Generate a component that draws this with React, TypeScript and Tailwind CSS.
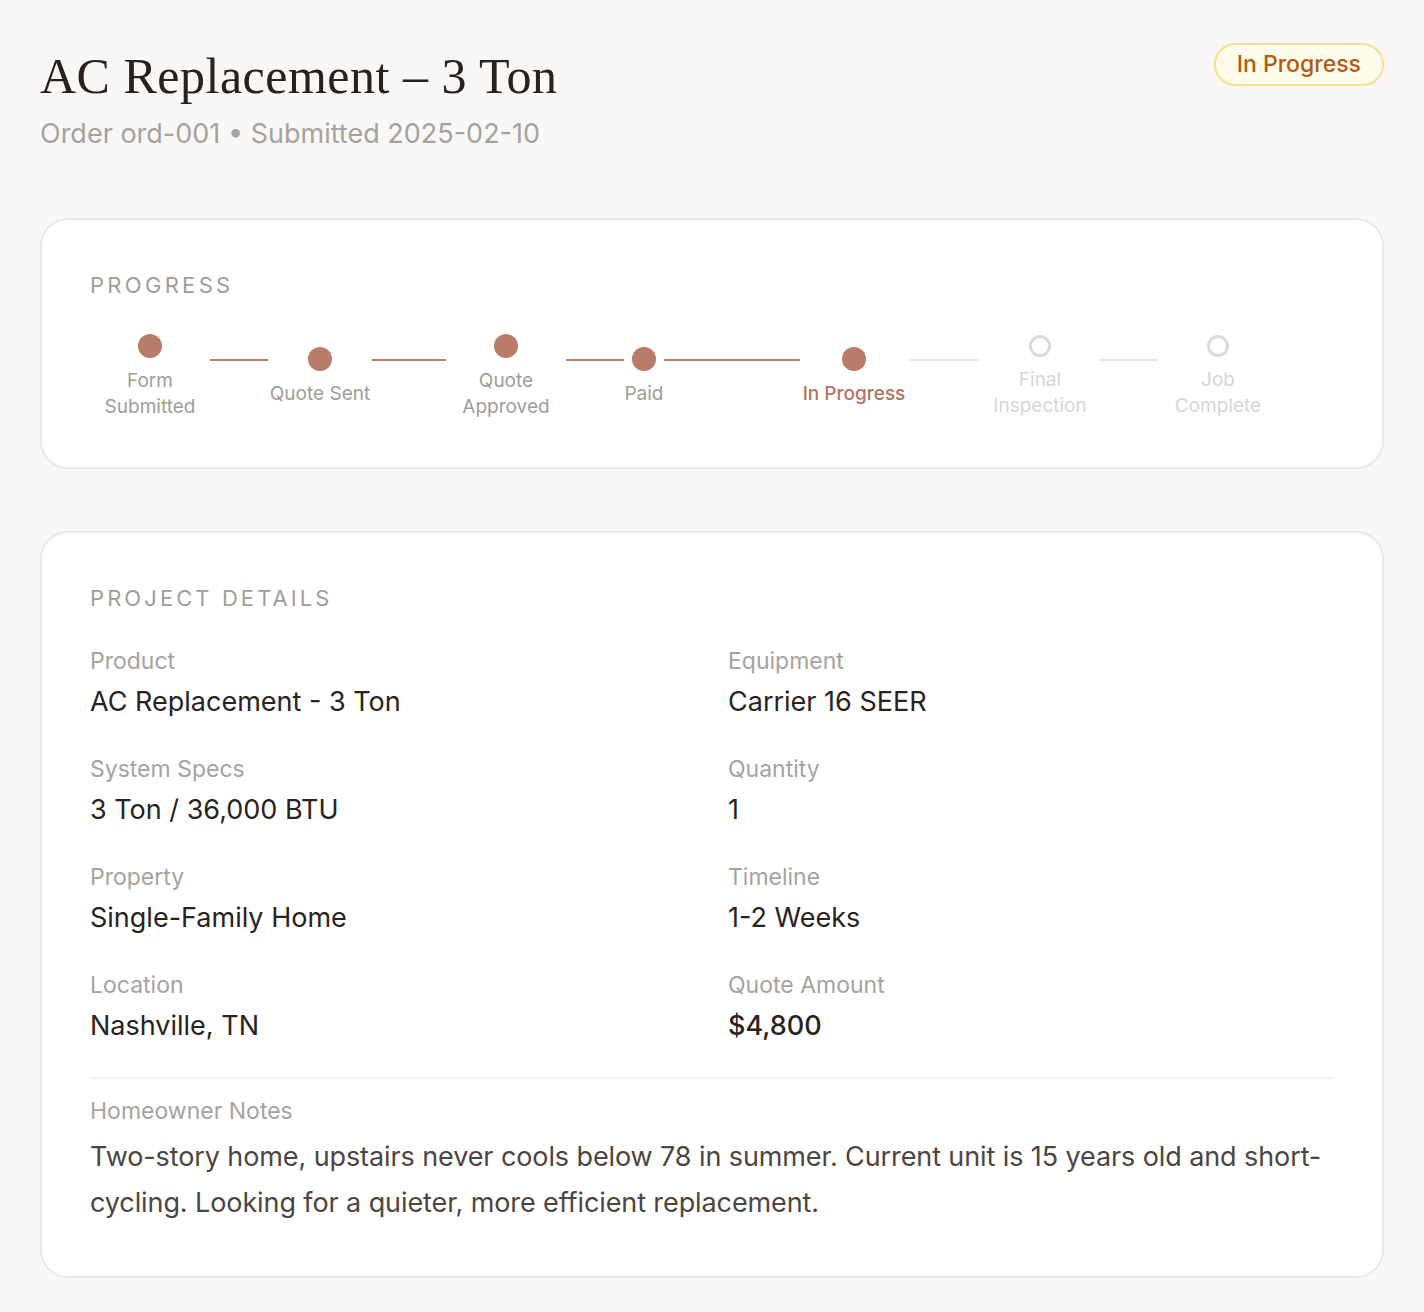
import React from "react";

type Step = { lines: string[]; w: string; state: "done" | "current" | "todo" };

const steps: Step[] = [
  { lines: ["Form", "Submitted"], w: "w-[120px]", state: "done" },
  { lines: ["Quote Sent"], w: "w-[104px]", state: "done" },
  { lines: ["Quote", "Approved"], w: "w-[120px]", state: "done" },
  { lines: ["Paid"], w: "w-[40px]", state: "done" },
  { lines: ["In Progress"], w: "w-[108px]", state: "current" },
  { lines: ["Final", "Inspection"], w: "w-[120px]", state: "todo" },
  { lines: ["Job", "Complete"], w: "w-[120px]", state: "todo" },
];

// connector widths between steps, measured off the design
const lines = [
  { w: "w-[58px]", on: true },
  { w: "w-[74px]", on: true },
  { w: "w-[58px]", on: true },
  { w: "w-[136px]", on: true },
  { w: "w-[70px]", on: false },
  { w: "w-[58px]", on: false },
];

const details = [
  { label: "Product", value: "AC Replacement - 3 Ton" },
  { label: "Equipment", value: "Carrier 16 SEER" },
  { label: "System Specs", value: "3 Ton / 36,000 BTU" },
  { label: "Quantity", value: "1" },
  { label: "Property", value: "Single-Family Home" },
  { label: "Timeline", value: "1-2 Weeks" },
  { label: "Location", value: "Nashville, TN" },
  { label: "Quote Amount", value: "$4,800", strong: true },
];

function StepItem({ step }: { step: Step }) {
  const dot =
    step.state === "todo" ? (
      <div className="w-[22px] h-[22px] rounded-full border-[3px] border-[#dcdad7] bg-white" />
    ) : (
      <div className="w-6 h-6 rounded-full bg-[#b97c69]" />
    );
  const color =
    step.state === "current"
      ? "text-[#b3735e] font-medium"
      : step.state === "todo"
      ? "text-[#d8d5d2]"
      : "text-[#a29c97]";
  return (
    <div className={`${step.w} shrink-0 flex flex-col items-center`}>
      {dot}
      <div className={`mt-2.5 text-center text-[19px] leading-[26px] ${color}`}>
        {step.lines.map((l) => (
          <div key={l} className="whitespace-nowrap">{l}</div>
        ))}
      </div>
    </div>
  );
}

export default function App() {
  return (
    <main
      className="min-h-screen bg-[#f9f8f6] px-10 pt-[46px] pb-10"
      style={{ fontFamily: 'Inter, "Liberation Sans", Arial, sans-serif' }}
    >
      <div className="flex items-start justify-between">
        <div>
          <h1
            className="text-[50px] leading-[60px] text-[#2a201c] tracking-[0.5px]"
            style={{ fontFamily: '"Liberation Serif", "DejaVu Serif", serif' }}
          >
            AC Replacement – 3 Ton
          </h1>
          <p className="mt-[10px] text-[27px] leading-[36px] text-[#a8a29e]">
            Order ord-001 • Submitted 2025-02-10
          </p>
        </div>
        <span className="-mt-[3px] inline-flex items-center h-[43px] px-[21px] rounded-full border-2 border-[#f6df8f] bg-[#fefbea] text-[23px] font-medium text-[#b45a12]">
          In Progress
        </span>
      </div>

      <section className="mt-[66px] bg-white rounded-[28px] border-2 border-[#ece9e5] px-12 pt-[50px] pb-[47px]">
        <h2 className="text-[22px] leading-[30px] tracking-[0.15em] text-[#a29c97]">PROGRESS</h2>
        <div className="mt-[34px] flex items-center">
          {steps.map((s, i) => (
            <React.Fragment key={i}>
              <StepItem step={s} />
              {i < lines.length && (
                <div
                  className={`${lines[i].w} shrink-0 h-0.5 mb-[34px] ${
                    lines[i].on ? "bg-[#b97c69]" : "bg-[#e7e5e2]"
                  } ${i === 4 ? "mx-px" : ""}`}
                />
              )}
            </React.Fragment>
          ))}
        </div>
      </section>

      <section className="mt-[62px] bg-white rounded-[28px] border-2 border-[#ece9e5] px-12 pt-[50px] pb-[50px]">
        <h2 className="text-[22px] leading-[30px] tracking-[0.14em] text-[#a29c97]">PROJECT DETAILS</h2>
        <div className="mt-[33px] grid grid-cols-2 gap-x-8 gap-y-[34px]">
          {details.map((d) => (
            <div key={d.label}>
              <div className="text-[23px] leading-[30px] text-[#a8a29e]">{d.label}</div>
              <div
                className={`mt-[8px] text-[27px] leading-[36px] text-[#292320] ${
                  d.strong ? "font-medium" : ""
                }`}
              >
                {d.value}
              </div>
            </div>
          ))}
        </div>
        <div className="mt-[33px] border-t-2 border-[#f3f1ee] pt-[17px]">
          <div className="text-[23px] leading-[30px] text-[#a8a29e]">Homeowner Notes</div>
          <p className="mt-[8px] text-[27px] leading-[46px] tracking-[-0.1px] text-[#4d4541]">
            Two-story home, upstairs never cools below 78 in summer. Current unit is 15 years old and short-cycling. Looking for a quieter, more efficient replacement.
          </p>
        </div>
      </section>
    </main>
  );
}
